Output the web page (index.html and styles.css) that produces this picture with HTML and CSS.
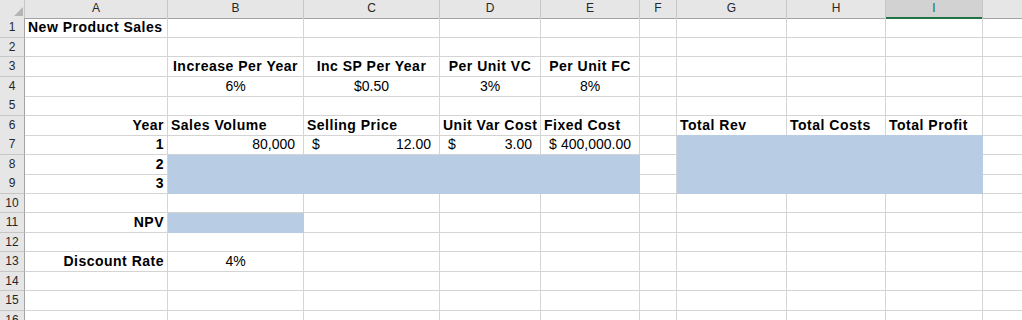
FILE: index.html
```html
<!DOCTYPE html>
<html lang="en">
<head>
    <meta charset="UTF-8">
    <meta name="viewport" content="width=device-width, initial-scale=1.0">
    <title>New Product Sales</title>
    <link rel="stylesheet" href="styles.css">
</head>
<body>
    <div class="sheet">
        <!-- column letters -->
        <div class="row head">
            <div class="corner">
                <svg width="25" height="18" viewBox="0 0 25 18"><polygon points="23,7 23,16 14,16" fill="#b4b4b4"/></svg>
            </div>
            <div class="col">A</div>
            <div class="col">B</div>
            <div class="col">C</div>
            <div class="col">D</div>
            <div class="col">E</div>
            <div class="col">F</div>
            <div class="col">G</div>
            <div class="col">H</div>
            <div class="col selected">I</div>
            <div class="col"></div>
        </div>

        <div class="row">
            <div class="num">1</div>
            <div class="cell bold">New Product Sales</div>
            <div class="cell"></div><div class="cell"></div><div class="cell"></div><div class="cell"></div>
            <div class="cell"></div><div class="cell"></div><div class="cell"></div><div class="cell"></div><div class="cell"></div>
        </div>

        <div class="row">
            <div class="num">2</div>
            <div class="cell"></div><div class="cell"></div><div class="cell"></div><div class="cell"></div><div class="cell"></div>
            <div class="cell"></div><div class="cell"></div><div class="cell"></div><div class="cell"></div><div class="cell"></div>
        </div>

        <div class="row">
            <div class="num">3</div>
            <div class="cell"></div>
            <div class="cell bold center">Increase Per Year</div>
            <div class="cell bold center">Inc SP Per Year</div>
            <div class="cell bold center">Per Unit VC</div>
            <div class="cell bold center">Per Unit FC</div>
            <div class="cell"></div><div class="cell"></div><div class="cell"></div><div class="cell"></div><div class="cell"></div>
        </div>

        <div class="row">
            <div class="num">4</div>
            <div class="cell"></div>
            <div class="cell center">6%</div>
            <div class="cell center">$0.50</div>
            <div class="cell center">3%</div>
            <div class="cell center">8%</div>
            <div class="cell"></div><div class="cell"></div><div class="cell"></div><div class="cell"></div><div class="cell"></div>
        </div>

        <div class="row">
            <div class="num">5</div>
            <div class="cell"></div><div class="cell"></div><div class="cell"></div><div class="cell"></div><div class="cell"></div>
            <div class="cell"></div><div class="cell"></div><div class="cell"></div><div class="cell"></div><div class="cell"></div>
        </div>

        <div class="row">
            <div class="num">6</div>
            <div class="cell bold right">Year</div>
            <div class="cell bold">Sales Volume</div>
            <div class="cell bold">Selling Price</div>
            <div class="cell bold">Unit Var Cost</div>
            <div class="cell bold">Fixed Cost</div>
            <div class="cell"></div>
            <div class="cell bold">Total Rev</div>
            <div class="cell bold">Total Costs</div>
            <div class="cell bold">Total Profit</div>
            <div class="cell"></div>
        </div>

        <div class="row">
            <div class="num">7</div>
            <div class="cell bold right">1</div>
            <div class="cell acc"><span></span><span>80,000</span></div>
            <div class="cell acc"><span>$</span><span>12.00</span></div>
            <div class="cell acc"><span>$</span><span>3.00</span></div>
            <div class="cell acc"><span>$</span><span>400,000.00</span></div>
            <div class="cell"></div>
            <div class="cell fill"></div><div class="cell fill"></div><div class="cell fill"></div>
            <div class="cell"></div>
        </div>

        <div class="row">
            <div class="num">8</div>
            <div class="cell bold right">2</div>
            <div class="cell fill"></div><div class="cell fill"></div><div class="cell fill"></div><div class="cell fill"></div>
            <div class="cell"></div>
            <div class="cell fill"></div><div class="cell fill"></div><div class="cell fill"></div>
            <div class="cell"></div>
        </div>

        <div class="row">
            <div class="num">9</div>
            <div class="cell bold right">3</div>
            <div class="cell fill"></div><div class="cell fill"></div><div class="cell fill"></div><div class="cell fill"></div>
            <div class="cell"></div>
            <div class="cell fill"></div><div class="cell fill"></div><div class="cell fill"></div>
            <div class="cell"></div>
        </div>

        <div class="row">
            <div class="num">10</div>
            <div class="cell"></div><div class="cell"></div><div class="cell"></div><div class="cell"></div><div class="cell"></div>
            <div class="cell"></div><div class="cell"></div><div class="cell"></div><div class="cell"></div><div class="cell"></div>
        </div>

        <div class="row">
            <div class="num">11</div>
            <div class="cell bold right">NPV</div>
            <div class="cell fill"></div>
            <div class="cell"></div><div class="cell"></div><div class="cell"></div>
            <div class="cell"></div><div class="cell"></div><div class="cell"></div><div class="cell"></div><div class="cell"></div>
        </div>

        <div class="row">
            <div class="num">12</div>
            <div class="cell"></div><div class="cell"></div><div class="cell"></div><div class="cell"></div><div class="cell"></div>
            <div class="cell"></div><div class="cell"></div><div class="cell"></div><div class="cell"></div><div class="cell"></div>
        </div>

        <div class="row">
            <div class="num">13</div>
            <div class="cell bold right">Discount Rate</div>
            <div class="cell center">4%</div>
            <div class="cell"></div><div class="cell"></div><div class="cell"></div>
            <div class="cell"></div><div class="cell"></div><div class="cell"></div><div class="cell"></div><div class="cell"></div>
        </div>

        <div class="row">
            <div class="num">14</div>
            <div class="cell"></div><div class="cell"></div><div class="cell"></div><div class="cell"></div><div class="cell"></div>
            <div class="cell"></div><div class="cell"></div><div class="cell"></div><div class="cell"></div><div class="cell"></div>
        </div>

        <div class="row">
            <div class="num">15</div>
            <div class="cell"></div><div class="cell"></div><div class="cell"></div><div class="cell"></div><div class="cell"></div>
            <div class="cell"></div><div class="cell"></div><div class="cell"></div><div class="cell"></div><div class="cell"></div>
        </div>

        <div class="row">
            <div class="num">16</div>
            <div class="cell"></div><div class="cell"></div><div class="cell"></div><div class="cell"></div><div class="cell"></div>
            <div class="cell"></div><div class="cell"></div><div class="cell"></div><div class="cell"></div><div class="cell"></div>
        </div>
    </div>
</body>
</html>
```

FILE: styles.css
```css
body {
    margin: 0;
    padding: 0;
    background-color: #ffffff;
    color: #000;
    font-family: "Liberation Sans", Arial, sans-serif;
    font-size: 14px;
    overflow: hidden;
}

.sheet {
    width: 100%;
    height: 100vh;
    overflow: hidden;
}

.row {
    display: grid;
    grid-template-columns: 25px 143px 136px 136px 101px 99px 37px 110px 99px 97px 100px;
    height: 19.5px;
}

.row > div {
    box-sizing: border-box;
    white-space: nowrap;
}

/* column letters */
.head {
    height: 18px;
}

.corner,
.col {
    background: #e6e6e6;
    border-right: 1px solid #c6c6c6;
    border-bottom: 1px solid #a3a3a3;
    font-size: 12px;
    line-height: 17px;
    text-align: center;
    color: #262626;
}

.corner svg {
    display: block;
}

.col.selected {
    background: #d2d2d2;
    color: #1e6b40;
    border-bottom: 2px solid #217346;
    line-height: 16px;
}

/* row numbers */
.num {
    background: #e6e6e6;
    border-right: 1px solid #a3a3a3;
    border-bottom: 1px solid #c6c6c6;
    font-size: 12px;
    line-height: 18px;
    text-align: center;
    color: #262626;
}

.cell {
    border-right: 1px solid #d4d4d4;
    border-bottom: 1px solid #d4d4d4;
    padding: 0 3px;
    line-height: 19px;
}

.bold {
    font-weight: bold;
    letter-spacing: 0.5px;
}

.center {
    text-align: center;
}

.right {
    text-align: right;
}

/* accounting format: symbol on the left, amount on the right */
.acc {
    display: flex;
    justify-content: space-between;
    padding: 0 8px;
}

.fill {
    background: #b8cce4;
    border-color: #b8cce4;
}
```
